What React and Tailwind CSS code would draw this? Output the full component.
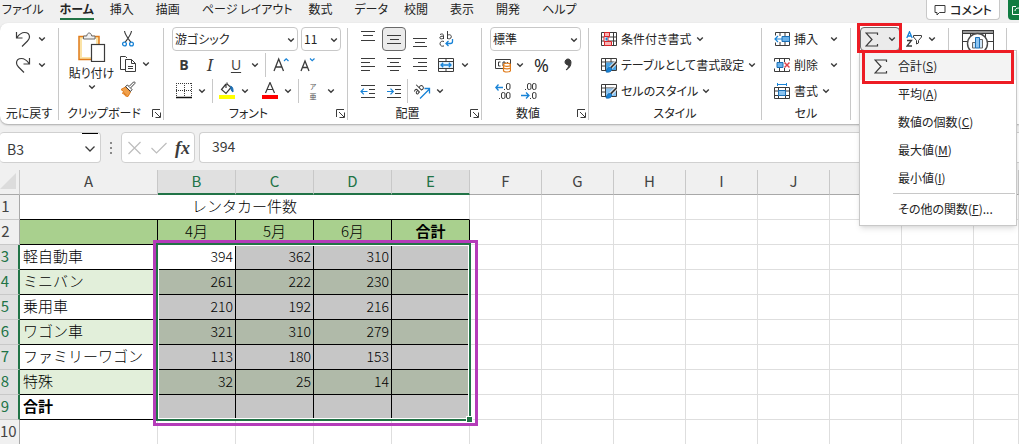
import { useState } from 'react';

const TABS = [
  { label: 'ファイル', kana: true },
  { label: 'ホーム', kana: true, active: true },
  { label: '挿入' },
  { label: '描画' },
  { label: 'ページ レイアウト', kana: true },
  { label: '数式' },
  { label: 'データ', kana: true },
  { label: '校閲' },
  { label: '表示' },
  { label: '開発' },
  { label: 'ヘルプ', kana: true },
];

const COLUMNS = ['A', 'B', 'C', 'D', 'E', 'F', 'G', 'H', 'I', 'J', 'K', 'L', 'M'];

const ROWS = [
  { id: 3, name: '軽自動車', values: [394, 362, 310] },
  { id: 4, name: 'ミニバン', values: [261, 222, 230] },
  { id: 5, name: '乗用車', values: [210, 192, 216] },
  { id: 6, name: 'ワゴン車', values: [321, 310, 279] },
  { id: 7, name: 'ファミリーワゴン', values: [113, 180, 153] },
  { id: 8, name: '特殊', values: [32, 25, 14] },
  { id: 9, name: '合計', values: ['', '', ''], bold: true },
];

const SUM_MENU = [
  { label: '合計', key: 'S', icon: true },
  { label: '平均', key: 'A' },
  { label: '数値の個数', key: 'C' },
  { label: '最大値', key: 'M' },
  { label: '最小値', key: 'I' },
];

/* ---------- icons ---------- */

function Svg({ w = 16, h = 16, children, className = '' }) {
  return (
    <svg
      width={w}
      height={h}
      viewBox={`0 0 ${w} ${h}`}
      fill="none"
      stroke="#3b3b3b"
      className={`shrink-0 ${className}`}
      aria-hidden="true"
    >
      {children}
    </svg>
  );
}

function Chevron({ className = '' }) {
  return (
    <Svg w={8} h={6} className={className}>
      <path d="M1.2 1.5 4 4.2 6.8 1.5" strokeWidth="1.4" />
    </Svg>
  );
}

const UndoIcon = () => (
  <Svg>
    <path d="M1.5 1v6h6M1.7 6.8C4 3.6 6.5 1.5 9.5 1.5c3 0 5 2 5 4.6 0 1.6-.8 2.7-2 3.9L7 15.5" strokeWidth="1.2" />
  </Svg>
);

const RedoIcon = () => (
  <Svg>
    <path d="M14.5 1v6h-6M14.3 6.8C12 3.6 9.5 1.5 6.5 1.5c-3 0-5 2-5 4.6 0 1.6.8 2.7 2 3.9L9 15.5" strokeWidth="1.2" />
  </Svg>
);

const PasteIcon = () => (
  <Svg w={28} h={30}>
    <rect x="1" y="4.5" width="20" height="23" fill="#fbe3a6" stroke="#e07b1a" strokeWidth="1.5" />
    <rect x="4" y="7" width="14" height="18" fill="#fff" stroke="none" />
    <path d="M5.5 7V4h3.2c.3-1.8 1.2-3 2.5-3s2.2 1.2 2.5 3H17v3z" fill="#f1f1f1" stroke="#6a6a6a" />
    <rect x="13.5" y="12.5" width="13" height="17" fill="#fff" strokeWidth="1.2" />
  </Svg>
);

const CutIcon = () => (
  <Svg>
    <path d="M4.5 0c.5 4 4 8 6.5 11.5M11.5 0C11 4 7.5 8 5 11.5" strokeWidth="1.1" />
    <circle cx="4.5" cy="13" r="1.9" stroke="#1883d7" strokeWidth="1.3" />
    <circle cx="11.5" cy="13" r="1.9" stroke="#1883d7" strokeWidth="1.3" />
  </Svg>
);

const CopyIcon = () => (
  <Svg>
    <path d="M5 13.5H.5v-13h5L7 2" />
    <path d="M5.5 3.5h6l4 4v8h-10z" fill="#fff" />
    <path d="M11.5 3.5v4h4M8 10.5h5M8 12.5h5" />
  </Svg>
);

const BrushIcon = () => (
  <Svg>
    <path d="M1 8.5 5.5 6l5 5-2.5 4.5L5.5 15l.5-2-2 1 .5-2-2 .5 1-2z" fill="#f0a04b" stroke="#e07b1a" />
    <path d="m5.5 5.5 2-1.5L12 8.5l-1.5 2z" fill="#fff" />
    <path d="M9 5.5 13.5 1c.8-.6 2 .5 1.4 1.4L10.5 7" fill="#fff" />
  </Svg>
);

const LauncherIcon = () => (
  <Svg w={9} h={9}>
    <path d="M.5 8V.5H8M3 3l5 5M8.5 3.5v5h-5" />
  </Svg>
);

const BordersIcon = () => (
  <Svg>
    <path d="M.5 0v14M15.5 0v14M8.5 0v14M0 .5h16M0 7.5h16" strokeDasharray="1 1" />
    <path d="M0 14.5h16" stroke="#111" strokeWidth="1.5" />
  </Svg>
);

const FillIcon = () => (
  <Svg w={16} h={18}>
    <path d="M7 2 2.5 7.5 7 11.5l5-6L8 2V.5M7 2v4" strokeWidth="1.2" />
    <path d="M11.5 4c2 .5 2.8 2.5 2.5 6-1.8-.5-1.8-3-2.5-4.5" fill="#1b6fb5" stroke="#1b6fb5" />
    <path d="M0 15h16" stroke="#ff0" strokeWidth="4" />
  </Svg>
);

const FontColorIcon = () => (
  <Svg w={16} h={18}>
    <path d="M3.5 11 8 .5 12.5 11M5 7.5h6" strokeWidth="1.2" />
    <path d="M0 15h16" stroke="#f00" strokeWidth="4" />
  </Svg>
);

const GrowIcon = () => (
  <Svg w={18} h={16}>
    <path d="m1 14 4.7-12L10.5 14M2.500 10h6.5" strokeWidth="1.3" />
    <path d="m11 4 2.2-2.2L15.5 4" stroke="#1883d7" strokeWidth="1.2" />
  </Svg>
);

const ShrinkIcon = () => (
  <Svg w={18} h={16}>
    <path d="m2 14 4-10 4 10M3.5 10.5h5" strokeWidth="1.3" />
    <path d="M11 1.5 13.2 3.7 15.5 1.5" stroke="#1883d7" strokeWidth="1.2" />
  </Svg>
);

const ALIGN_PATHS = {
  top: 'M1 .5h14M3 4.5h10M1 9.5h14',
  middle: 'M1 4.5h14M4 8.5h9M1 12.5h14',
  bottom: 'M1 7.5h14M3 11.5h10M1 15.5h14',
  left: 'M1 1.5h14M1 5.5h9M1 9.5h14M1 13.5h9',
  center: 'M1 1.5h14M4 5.5h9M1 9.5h14M4 13.5h9',
  right: 'M1 1.5h14M6 5.5h9M1 9.5h14M6 13.5h9',
};

const LinesIcon = ({ kind }) => (
  <Svg>
    <path d={ALIGN_PATHS[kind]} strokeWidth="1.1" />
  </Svg>
);

const IndentIcon = ({ out }) => (
  <Svg>
    <path d="M1 2.5h14M9 6.5h6M9 10.5h6M1 14.5h14" />
    <path
      d={out ? 'M7.5 8.5H1M3.8 5.7 1 8.5l2.8 2.8' : 'M1 8.5h6.5M4.5 5.7l2.8 2.8-2.8 2.8'}
      stroke="#1883d7"
      strokeWidth="1.2"
    />
  </Svg>
);

const WrapIcon = () => (
  <Svg>
    <path d="M2 3.5c2-1 3.5-.5 3.5 1V8M5.5 5.2C3.5 5 1.8 5.5 1.8 6.8s2.5 1.6 3.7 0M9.5 0v8M9.5 4.5c.8-1.2 3.8-1.2 3.8 1.2s-3 2.6-3.8 1.3" />
    <path d="M6 10.5c-1.7-.8-4 0-4 2.2s2.2 3 4 2.2" />
    <path d="M14.5 8v2.5c0 1.2-.5 2-2 2H8M10.5 10 8 12.5l2.5 2.5" stroke="#1883d7" strokeWidth="1.3" />
  </Svg>
);

const MergeIcon = () => (
  <Svg>
    <path d="M.5 1.5h15v13H.5zM.5 4.5h15M.5 11.5h15M8 1.5v3M8 11.5v3" />
    <path d="M1 5h14v6H1z" fill="#e3f1fb" stroke="none" />
    <path d="M3 8h10M5.2 5.8 3 8l2.2 2.2M10.8 5.8 13 8l-2.2 2.2" stroke="#1883d7" strokeWidth="1.3" />
  </Svg>
);

const OrientIcon = () => (
  <Svg w={18} h={16}>
    <g transform="rotate(-45 6 6)">
      <path d="M1 4.5c2-1 3.2-.5 3.2 1V9M4.2 6.2C2.2 6 1 6.5 1 7.6s2 1.6 3.2 0M7 1v8M7 5.5c.8-1.2 3.6-1.2 3.6 1.2S7.8 9.3 7 8" />
    </g>
    <path d="M7 15.5 16.5 6M11.5 5.5h5v5" stroke="#1883d7" strokeWidth="1.3" />
  </Svg>
);

const CurrencyIcon = () => (
  <Svg>
    <path d="M.5 2.5h15v9H.5z" />
    <path d="M5.5 5H3.5v4h2M8 9V5h2v2M12.5 5v1" />
    <path d="M8.5 8c0-2.5 7-2.5 7 0v5.5c0 2-7 2-7 0z" fill="#fff" stroke="#e07b1a" strokeWidth="1.2" />
    <path d="M8.5 8c0 1.8 7 1.8 7 0M8.5 10.5c0 1.8 7 1.8 7 0" stroke="#e07b1a" strokeWidth="1.2" />
  </Svg>
);

const DecimalIcon = ({ more }) => (
  <Svg>
    {more ? (
      <>
        <path d="M8 4.5H.8M3.5 1.5.8 4.5l2.7 3" stroke="#1883d7" strokeWidth="1.3" />
        <rect x="11.5" y=".5" width="3.5" height="6" rx="1.5" />
        <rect x="6.5" y="9.5" width="3.5" height="6" rx="1.5" />
        <rect x="11.5" y="9.5" width="3.5" height="6" rx="1.5" />
        <path d="M9 6.5h1M4 15.5h1" />
      </>
    ) : (
      <>
        <path d="M0 12.5h7.5M5 9.5l3 3-3 3" stroke="#1883d7" strokeWidth="1.3" />
        <rect x="6.5" y=".5" width="3.5" height="6" rx="1.5" />
        <rect x="11.5" y=".5" width="3.5" height="6" rx="1.5" />
        <rect x="11.5" y="9.5" width="3.5" height="6" rx="1.5" />
        <path d="M4 6.5h1M9 15.5h1" />
      </>
    )}
  </Svg>
);

const CommaIcon = () => (
  <Svg w={8} h={14}>
    <path d="M4 1a3 3 0 1 0 .8 5.9C4.6 9 3.5 10.5 2 12c3-1.5 5-4 5-7.5C7 2.5 5.8 1 4 1z" fill="#3b3b3b" />
  </Svg>
);

const CondFormatIcon = () => (
  <Svg>
    <path d="M.5 1.5h15v13H.5zM.5 6h15M.5 10h15M12.5 1.5v13M3.5 1.5v13" />
    <path d="M3.5 1.5h5v4h-5zM3.5 10.5h7v4h-7z" fill="#f9b3b3" stroke="#d9262c" />
    <path d="M3 5.5h4v5H3z" fill="#fff" stroke="#d9262c" />
    <path d="M4.5 6.5h2v3h-2z" fill="#1883d7" stroke="none" />
  </Svg>
);

const TableStyleIcon = ({ cell }) => (
  <Svg>
    <path d="M.5 1.5h15v12H.5zM.5 5h15M.5 9h4M4.5 1.5v12" />
    {!cell && <path d="M10 1.5v4" />}
    <path d="M5 5.5h10V13H5z" fill={cell ? '#8cc4f0' : '#4ba3e3'} stroke="none" />
    <path d="m15.5 5-6 6" stroke="#fff" strokeWidth="3.5" />
    <path d="m15.5 5-6 6" strokeWidth="1.8" />
    <path d="M9.5 10.5c-2-.5-3.5 1-4.5 4.5 3.5.5 5.8-.5 5.8-3z" fill="#1883d7" stroke="#1b6fb5" />
  </Svg>
);

const CellInsertIcon = () => (
  <Svg>
    <path d="M1.5 4.5v-3h14v13h-14v-3M6 1.5V5M11 1.5V5M6 11v3.5M11 11v3.5" />
    <path d="M8 5.5h7.5v5H8z" fill="#6bb2ea" stroke="#1b6fb5" />
    <path d="M8 8H1M4 5 1 8l3 3" stroke="#1883d7" strokeWidth="1.2" />
  </Svg>
);

const CellDeleteIcon = () => (
  <Svg>
    <path d="M.5 4.5v-3h15v2M.5 11.5v3h15v-2M5.5 1.5V5M10.5 1.5V5M5.5 11v3.5M10.5 11v3.5" />
    <path d="M3 5.5h6v5H3z" fill="#6bb2ea" stroke="#1b6fb5" />
    <path d="m10.5 5.5 5 5M15.5 5.5l-5 5" stroke="#e0444a" strokeWidth="1.5" />
  </Svg>
);

const CellFormatIcon = () => (
  <Svg>
    <path d="M.5 4.5h15v11H.5zM.5 8h15M.5 12.5h15M4.5 4.5v11M11.5 4.5v11" />
    <path d="M4.5 7.5h7v5h-7z" fill="#8cc4f0" stroke="#1b6fb5" />
    <path d="M3.5 1.5h9M3.5 0v3M12.5 0v3" stroke="#1883d7" />
  </Svg>
);

const SigmaIcon = () => (
  <Svg w={14} h={15}>
    <path d="M12.5 3V1H1l6 6.5L1 14h11.5v-2" strokeWidth="1.2" />
  </Svg>
);

const SortIcon = () => (
  <Svg>
    <path d="M.8 7 3.5.8 6.2 7M1.8 5h3.5" stroke="#1883d7" strokeWidth="1.3" />
    <path d="M1 9.5h4.5L1 15h5" strokeWidth="1.3" />
    <path d="M7.5 4.5h8v1.5l-3 3.5v2.5l-2 1V9.500l-3-3.5z" />
  </Svg>
);

const AnalysisIcon = () => (
  <Svg w={32} h={30}>
    <rect x=".5" y=".5" width="31" height="28" fill="#fff" />
    <path d="M.5.5h31v3H.5z" fill="#999" />
    <path d="M1 11.5h31M1 20.5h31M8.5 4v24M23.5 4v24" />
    <circle cx="15.5" cy="13.5" r="10" fill="#fff" stroke="#4a4a4a" strokeWidth="1.4" />
    <path d="M10.5 12.5h3V18h-3zM17.5 9.5h3V18h-3z" fill="#cfe4f5" stroke="#666" />
    <path d="M13.5 7.5h4V18h-4z" fill="#8cc4f0" stroke="#1b6fb5" />
  </Svg>
);

const CommentIcon = () => (
  <Svg w={12} h={12}>
    <path d="M1 1.5h10v7H5.5L3 11V8.5H1z" />
  </Svg>
);

/* ---------- ribbon pieces ---------- */

function Group({ label, launcher, className = '', children }) {
  return (
    <section className={`flex shrink-0 ${className}`} aria-label={label}>
      <div className="flex min-w-0 flex-1 flex-col">
        <div className="h-[78px]">{children}</div>
        <div className="flex h-[18px] items-center">
          <span className="flex-1 text-center leading-[18px]">{label}</span>
          {launcher && (
            <button className="flex w-[14px] justify-center" aria-label={`${label}の設定`}>
              <LauncherIcon />
            </button>
          )}
        </div>
      </div>
      <div className="mt-0.5 mb-1 w-px bg-[#c8c8c8]" />
    </section>
  );
}

function Row({ className = '', children }) {
  return <div className={`flex h-[26px] items-center ${className}`}>{children}</div>;
}

function Tool({ label, className = 'w-[26px]', children }) {
  return (
    <button aria-label={label} className={`flex h-6 shrink-0 items-center justify-center ${className}`}>
      {children}
    </button>
  );
}

function Divider() {
  return <span className="h-6 w-px shrink-0 bg-[#c8c8c8]" />;
}

function Picker({ label, value, className }) {
  return (
    <div className={`relative h-6 shrink-0 ${className}`}>
      <select
        aria-label={label}
        defaultValue={value}
        className="h-6 w-full appearance-none rounded border border-[#c8c8c8] bg-white pl-0.5 text-xs text-[#242424]"
      >
        <option>{value}</option>
      </select>
      <Chevron className="pointer-events-none absolute top-[10px] right-[3px]" />
    </div>
  );
}

function LabeledTool({ icon, label, wide }) {
  return (
    <button className="flex h-[26px] items-center gap-1 whitespace-nowrap">
      {icon}
      <span>{label}</span>
      <Chevron className={wide ? 'ml-2' : ''} />
    </button>
  );
}

function SumMenu() {
  return (
    <div
      role="menu"
      className="absolute top-[23px] -left-px z-20 w-[158px] border border-[#c8c8c8] bg-white pt-px pb-px shadow-md"
    >
      {SUM_MENU.map((item) => (
        <button
          key={item.key}
          role="menuitem"
          className={`flex h-7 w-full items-center whitespace-nowrap ${item.icon ? 'bg-[#f3f3f3]' : ''}`}
        >
          <span className="flex w-[38px] justify-center pl-1">{item.icon && <SigmaIcon />}</span>
          <span>
            {item.label}(<u>{item.key}</u>)
          </span>
        </button>
      ))}
      <hr className="mt-px mr-px ml-[33px] border-[#c8c8c8]" />
      <button role="menuitem" className="flex h-[30px] w-full items-center pl-[38px] whitespace-nowrap">
        <span>
          その他の関数(<u>F</u>)...
        </span>
      </button>
      {/* callout round the first command */}
      <span className="pointer-events-none absolute -top-px left-0.5 h-[34px] w-[152px] border-3 border-[#ed1c24]" />
    </div>
  );
}

function TitleTabs() {
  return (
    <header className="flex h-[23px] items-start justify-between">
      <nav className="flex pl-0.5">
        {TABS.map((tab) => (
          <a
            key={tab.label}
            href="#"
            className={`h-5 leading-[18px] whitespace-nowrap ${tab.kana ? 'mr-4' : 'mr-[22px]'} ${
              tab.active ? 'border-b-2 border-[#217346] font-bold' : ''
            }`}
          >
            {tab.label}
          </a>
        ))}
      </nav>
      <div className="flex gap-2">
        <button className="flex h-5 w-[74px] items-center justify-center gap-1 rounded-b border border-t-0 border-[#c8c8c8] bg-white font-medium whitespace-nowrap">
          <CommentIcon />
          コメント
        </button>
        <button aria-label="共有" className="h-5 w-[11px] rounded-bl bg-[#107c41] pl-1">
          <svg width="7" height="12" viewBox="0 0 7 12" fill="none" stroke="#fff" aria-hidden="true">
            <path d="M4 2.5H.5v8H7M3 7c0-2 1.5-3 4-3" />
          </svg>
        </button>
      </div>
    </header>
  );
}

function Ribbon() {
  return (
    <div className="flex h-[101px] rounded-l-lg bg-white pt-[3px] shadow-[0_1px_2px_rgba(0,0,0,0.3)]">
      <Group label="元に戻す" className="w-[59px]">
        <Row className="gap-[7px] pl-[15px]">
          <UndoIcon />
          <Chevron />
        </Row>
        <Row className="gap-[7px] pl-[15px]">
          <RedoIcon />
          <Chevron />
        </Row>
      </Group>

      <Group label="クリップボード" launcher className="w-[105px]">
        <div className="flex">
          <button className="flex w-[61px] flex-col items-center pt-1.5 pl-1 whitespace-nowrap">
            <PasteIcon />
            <span className="mt-0.5 leading-[18px]">貼り付け</span>
            <Chevron className="mt-0.5" />
          </button>
          <div>
            <Tool label="切り取り" className="mt-px w-[16px]"><CutIcon /></Tool>
            <Row className="gap-1.5">
              <CopyIcon />
              <Chevron />
            </Row>
            <Tool label="書式のコピー" className="w-[16px]"><BrushIcon /></Tool>
          </div>
        </div>
      </Group>

      <Group label="フォント" launcher className="w-[184px]">
        <Row className="gap-[3px] pl-2">
          <Picker label="フォント名" value="游ゴシック" className="w-[126px]" />
          <Picker label="フォント サイズ" value="11" className="w-10" />
        </Row>
        <Row className="pl-[7px] font-['Open_Sans',sans-serif] text-sm text-[#3b3b3b]">
          <Tool label="太字"><b>B</b></Tool>
          <Tool label="斜体"><i className="font-['Noto_Serif','Liberation_Serif',serif] text-base">I</i></Tool>
          <Tool label="下線"><u className="underline-offset-2">U</u></Tool>
          <Tool label="下線の種類" className="w-[12px]"><Chevron /></Tool>
          <span className="w-[4px]" />
          <Divider />
          <Tool label="拡大" className="ml-0.5 w-[27px]"><GrowIcon /></Tool>
          <Tool label="縮小"><ShrinkIcon /></Tool>
        </Row>
        <Row className="gap-[6px] pl-3">
          <BordersIcon />
          <Chevron />
          <Divider />
          <FillIcon />
          <Chevron />
          <span className="w-px" />
          <FontColorIcon />
          <Chevron />
          <Divider />
          <span className="flex w-4 flex-col items-center text-[7px] leading-[10px] text-[#555]">
            <span>ア</span>
            <span>亜</span>
          </span>
          <Chevron />
        </Row>
      </Group>

      <Group label="配置" launcher className="w-[134px]">
        <Row className="pl-[7px]">
          <Tool label="上揃え"><LinesIcon kind="top" /></Tool>
          <Tool label="上下中央揃え" className="mx-px w-[24px] rounded border border-[#6a6a6a] bg-[#ebebeb]">
            <LinesIcon kind="middle" />
          </Tool>
          <Tool label="下揃え"><LinesIcon kind="bottom" /></Tool>
          <Tool label="折り返して全体を表示する"><WrapIcon /></Tool>
        </Row>
        <Row className="pl-[7px]">
          <Tool label="左揃え"><LinesIcon kind="left" /></Tool>
          <Tool label="中央揃え"><LinesIcon kind="center" /></Tool>
          <Tool label="右揃え"><LinesIcon kind="right" /></Tool>
          <Tool label="セルを結合して中央揃え"><MergeIcon /></Tool>
          <Tool label="結合の種類" className="w-[12px]"><Chevron /></Tool>
        </Row>
        <Row className="pl-[7px]">
          <Tool label="インデントを減らす"><IndentIcon out /></Tool>
          <Tool label="インデントを増やす"><IndentIcon /></Tool>
          <Divider />
          <Tool label="方向" className="w-7"><OrientIcon /></Tool>
          <Tool label="方向の種類" className="w-2"><Chevron /></Tool>
        </Row>
      </Group>

      <Group label="数値" launcher className="w-[107px]">
        <Row className="pl-2">
          <Picker label="表示形式" value="標準" className="w-[91px]" />
        </Row>
        <Row className="pl-2">
          <Tool label="通貨"><CurrencyIcon /></Tool>
          <Tool label="通貨の種類" className="w-2"><Chevron /></Tool>
          <Tool label="パーセント" className="ml-1 w-[27px] font-['Open_Sans',sans-serif] text-lg">%</Tool>
          <Tool label="桁区切り"><CommaIcon /></Tool>
        </Row>
        <Row className="pl-2">
          <Tool label="小数点以下の桁数を増やす"><DecimalIcon more /></Tool>
          <Tool label="小数点以下の桁数を減らす"><DecimalIcon /></Tool>
        </Row>
      </Group>

      <Group label="スタイル" className="w-[173px] [&_button]:ml-3">
        <LabeledTool icon={<CondFormatIcon />} label="条件付き書式" />
        <LabeledTool icon={<TableStyleIcon />} label="テーブルとして書式設定" />
        <LabeledTool icon={<TableStyleIcon cell />} label="セルのスタイル" />
      </Group>

      <Group label="セル" className="w-[89px] [&_button]:ml-3">
        <LabeledTool icon={<CellInsertIcon />} label="挿入" wide />
        <LabeledTool icon={<CellDeleteIcon />} label="削除" wide />
        <LabeledTool icon={<CellFormatIcon />} label="書式" />
      </Group>

      <Group label="" className="w-[98px]">
        <Row className="gap-1.5 pl-[9px]">
          <div className="relative">
            <button
              aria-label="オート SUM"
              className="flex h-6 w-10 items-center justify-center gap-[9px] rounded border border-[#6a6a6a] bg-[#ebebeb]"
            >
              <SigmaIcon />
              <Chevron />
            </button>
            <span className="pointer-events-none absolute -top-1 -left-[3px] z-30 h-[30px] w-[45px] border-3 border-[#ed1c24]" />
            <SumMenu />
          </div>
          <SortIcon />
          <Chevron />
        </Row>
      </Group>

      <Group label="" className="w-[58px]">
        <div className="pt-1 pl-[13px]">
          <AnalysisIcon />
        </div>
      </Group>
    </div>
  );
}

function FormulaBar() {
  const [formula, setFormula] = useState('394');

  return (
    <div className="flex h-[46px] items-start pt-2 font-['Noto_Sans_CJK_JP',sans-serif] text-sm">
      <div className="relative flex h-[31px] w-[101px] shrink-0 items-center rounded border border-l-0 border-[#d0d0d0] bg-white">
        <input
          aria-label="名前ボックス"
          defaultValue="B3"
          className="h-full w-20 bg-transparent pt-0.5 pl-[7px] text-[#3b3b3b] outline-none"
        />
        <svg width="12" height="8" viewBox="0 0 12 8" fill="none" stroke="#3b3b3b" className="mt-0.5 ml-1" aria-hidden="true">
          <path d="m1.5 1.5 4.5 4.5 4.5-4.5" strokeWidth="1.3" />
        </svg>
        <span className="absolute top-0 right-0.5 h-px w-4 bg-black" />
      </div>
      <svg width="20" height="31" viewBox="0 0 20 31" fill="#8a8a8a" className="shrink-0" aria-hidden="true">
        <path d="M9 10h2v2H9zM9 15h2v2H9zM9 20h2v2H9z" />
      </svg>
      <div className="flex h-[31px] w-[74px] shrink-0 items-center justify-between rounded border border-[#d0d0d0] bg-white px-1">
        <button aria-label="キャンセル">
          <svg width="17" height="16" viewBox="0 0 17 16" fill="none" stroke="#bdbdbd" aria-hidden="true">
            <path d="m2.5 2 12 12M14.5 2l-12 12" strokeWidth="1.2" />
          </svg>
        </button>
        <button aria-label="入力">
          <svg width="18" height="16" viewBox="0 0 18 16" fill="none" stroke="#bdbdbd" aria-hidden="true">
            <path d="m1.5 8 5 5L16.5 3" strokeWidth="1.2" />
          </svg>
        </button>
        <button
          aria-label="関数の挿入"
          className="font-['Liberation_Serif',serif] text-lg leading-[18px] font-bold text-[#3b3b3b] italic"
        >
          fx
        </button>
      </div>
      <input
        aria-label="数式バー"
        value={formula}
        onChange={(e) => setFormula(e.target.value)}
        className="ml-1 h-[31px] min-w-0 flex-1 rounded-l border border-r-0 border-[#d0d0d0] bg-white pb-1 pl-3 text-[#3b3b3b] outline-none"
      />
    </div>
  );
}

function EmptyCells({ count }) {
  return Array.from({ length: count }, (_, i) => (
    <td key={i} className="border-r border-b border-[#dedede]" />
  ));
}

function RowHead({ n, selected }) {
  return (
    <th
      scope="row"
      className={`h-[25px] border-b border-b-[#c8c8c8] pr-2 text-center font-normal ${
        selected
          ? 'border-r-2 border-r-[#217346] bg-[#e0e0e0] text-[#217346]'
          : 'border-r border-r-[#a8a8a8] bg-[#f0f0f0] text-[#444]'
      }`}
    >
      {n}
    </th>
  );
}

function Sheet() {
  return (
    <div className="relative">
      <table className="w-full table-fixed border-separate border-spacing-0 bg-white font-['Noto_Sans_CJK_JP',sans-serif] text-[15px] leading-5 font-light whitespace-nowrap text-black [font-feature-settings:normal] [&_td]:pt-0 [&_td]:pb-0.5 [&_th]:pt-0 [&_th]:pb-0.5">
        <colgroup>
          <col className="w-5" />
          <col className="w-[138px]" />
          <col className="w-[78px]" span="4" />
          <col className="w-[72px]" span="7" />
          <col />
        </colgroup>
        <thead>
          <tr>
            <th className="h-[25px] border-r border-b border-r-[#c8c8c8] border-b-[#a8a8a8] bg-[#f0f0f0] px-0">
              <svg width="17" height="16" viewBox="0 0 17 16" fill="#dcdcdc" aria-hidden="true">
                <path d="M16 0v16H0z" />
              </svg>
            </th>
            {COLUMNS.map((col, i) => (
              <th
                key={col}
                scope="col"
                className={`border-r border-r-[#c8c8c8] font-normal ${
                  i > 0 && i < 5
                    ? 'border-b-2 border-b-[#217346] bg-[#e0e0e0] text-[#217346]'
                    : 'border-b border-b-[#a8a8a8] bg-[#f0f0f0] text-[#444]'
                }`}
              >
                {col}
              </th>
            ))}
          </tr>
        </thead>
        <tbody>
          <tr>
            <RowHead n={1} />
            <td colSpan={5} className="border-r border-b border-r-[#dedede] border-b-black text-center">
              レンタカー件数
            </td>
            <EmptyCells count={8} />
          </tr>
          <tr>
            <RowHead n={2} />
            {['', '4月', '5月', '6月', '合計'].map((text, i) => (
              <td
                key={i}
                className={`border-r border-b border-black bg-[#a9d08e] text-center ${text === '合計' ? 'font-bold' : ''}`}
              >
                {text}
              </td>
            ))}
            <EmptyCells count={8} />
          </tr>
          {ROWS.map((row) => {
            const banded = row.id % 2 === 0;
            return (
              <tr key={row.id}>
                <RowHead n={row.id} selected />
                <td
                  className={`border-r border-b border-black pl-[3px] ${banded ? 'bg-[#e2efda]' : ''} ${
                    row.bold ? 'font-bold' : ''
                  }`}
                >
                  {row.name}
                </td>
                {[...row.values, ''].map((value, i) => (
                  <td
                    key={i}
                    className={`border-r border-b border-black pr-0.5 text-right text-sm ${
                      row.id === 3 && i === 0 ? 'bg-white' : banded ? 'bg-[#b0baa9]' : 'bg-[#c6c6c6]'
                    }`}
                  >
                    {value}
                  </td>
                ))}
                <EmptyCells count={8} />
              </tr>
            );
          })}
          <tr>
            <RowHead n={10} />
            <EmptyCells count={13} />
          </tr>
        </tbody>
      </table>

      {/* selection frame with its fill handle */}
      <div className="pointer-events-none absolute top-[73px] left-[156px] h-[178px] w-[315px] border-2 border-[#217346] shadow-[inset_0_0_0_1px_#fff]" />
      <div className="absolute top-[246px] left-[466px] size-[7px] border border-white bg-[#217346]" />
      <div className="pointer-events-none absolute top-[70px] left-[153px] h-[186px] w-[325px] border-3 border-[#b43cb9]" />
    </div>
  );
}

export default function App() {
  return (
    <div className="h-screen overflow-hidden bg-[#f0f0f0] font-['Noto_Sans_CJK_JP',sans-serif] text-xs text-[#242424] [font-feature-settings:'palt']">
      <TitleTabs />
      <Ribbon />
      <FormulaBar />
      <Sheet />
    </div>
  );
}
